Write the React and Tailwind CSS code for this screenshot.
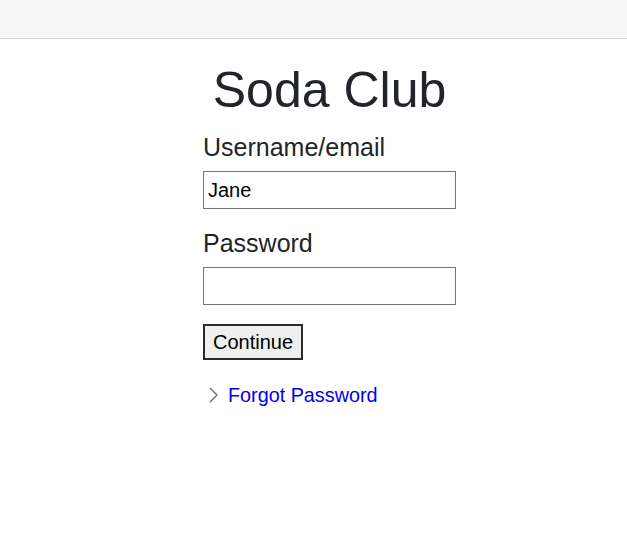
// Soda Club sign-in page.

function ChevronIcon() {
  return (
    <svg
      width="12"
      height="16"
      viewBox="0 0 12 16"
      className="shrink-0"
      aria-hidden="true"
    >
      <polyline
        points="3,1 10,8 3,15"
        fill="none"
        stroke="#6b6b6b"
        strokeWidth="1.3"
      />
    </svg>
  );
}

function Field({ label, type = "text", value }) {
  return (
    <div>
      <label className="block text-[25px] leading-[30px] text-[#212529]">
        {label}
      </label>
      <input
        type={type}
        defaultValue={value}
        className="mt-[9px] block h-[38px] w-[253px] border border-[#767676] bg-white pl-[4px] text-[20px] text-black outline-none"
      />
    </div>
  );
}

export default function App() {
  return (
    <div
      className="min-h-[533px] bg-white"
      style={{ fontFamily: '"Liberation Sans", Arial, sans-serif' }}
    >
      <div className="h-[39px] border-b border-[#d3d3d3] bg-[#f7f7f7]" />

      <div className="flex justify-center pl-[32px]">
        <div className="w-[253px]">
          <h1 className="mt-[26px] whitespace-nowrap text-center text-[50px] leading-[50px] text-[#212529]">
            Soda Club
          </h1>

          <div className="mt-[17px]">
            <Field label="Username/email" value="Jane" />
          </div>

          <div className="mt-[19px]">
            <Field label="Password" type="password" />
          </div>

          <button
            type="button"
            className="mt-[19px] h-[36px] border-2 border-[#2b2b2b] bg-[#efefef] px-2 text-[20px] leading-none text-black"
          >
            Continue
          </button>

          <div className="mt-[23px] flex items-center gap-[9px] pl-[4px]">
            <ChevronIcon />
            <a
              href="#"
              className="text-[19.8px] leading-[24px] text-[#0000ee]"
            >
              Forgot Password
            </a>
          </div>
        </div>
      </div>
    </div>
  );
}
